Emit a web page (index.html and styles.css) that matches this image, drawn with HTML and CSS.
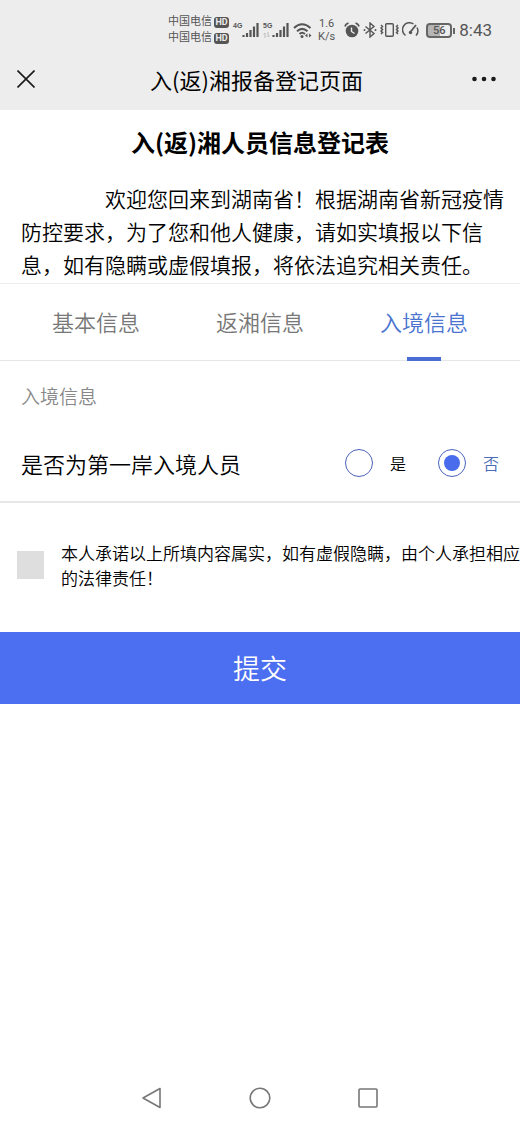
FILE: index.html
```html
<!DOCTYPE html>
<html lang="zh-CN">
<head>
<meta charset="utf-8">
<meta name="viewport" content="width=device-width, initial-scale=1">
<title>入(返)湘报备登记页面</title>
<link rel="stylesheet" href="styles.css">
</head>
<body>
<div class="screen">
  <header class="top">
    <div class="status">
      <div class="carriers">
        <div class="carrier">中国电信<span class="hd">HD</span></div>
        <div class="carrier">中国电信<span class="hd">HD</span></div>
      </div>
      <div class="signal">
        <span class="gen">4G</span>
        <svg width="17" height="16" viewBox="0 0 17 16"><path d="M1.5 13v2M5 11v4M8.500 8v7M12 4.500v10.500M15.500 1v14" stroke="#555" stroke-width="2.200"/></svg>
      </div>
      <div class="signal">
        <span class="gen">5G<svg class="arrows" width="7" height="6" viewBox="0 0 7 6"><path d="M2 6V1L.5 2.500M5 0v5l1.500-1.500" fill="none" stroke="#bbb"/></svg></span>
        <svg width="17" height="16" viewBox="0 0 17 16"><path d="M1.500 13v2M5 11v4M8.500 8v7M12 4.500v10.500M15.500 1v14" stroke="#555" stroke-width="2.200"/></svg>
      </div>
      <svg class="wifi" width="19" height="17" viewBox="0 0 19 17"><g fill="none" stroke="#555" stroke-width="2"><path d="M1 6Q9 -1.500 17.500 6"/><path d="M4 9.300Q9 4.500 14.500 9.300"/><path d="M6.500 12Q9 9.500 12 12"/></g><circle cx="9" cy="14.500" r="1.500" fill="#555"/><path d="M14.500 11.500v4L12 13.500zM16 11.500v4l2.500-2z" fill="#555"/></svg>
      <div class="speed"><span>1.6</span><span>K/s</span></div>
      <div class="indicators">
        <svg width="16" height="16" viewBox="0 0 16 16"><circle cx="8" cy="9" r="6.300" fill="#555"/><path d="M1 4.500Q1.500 2 4.500 1M15 4.500Q14.500 2 11.500 1" fill="none" stroke="#555" stroke-width="1.600"/><path d="M7.500 5.500v4l3 2" fill="none" stroke="#ededed" stroke-width="1.400"/></svg>
        <svg width="14" height="16" viewBox="0 0 14 16"><path d="M2.500 4.500l8.500 7L7 15V1l4 3.500-8.500 7" fill="none" stroke="#555" stroke-width="1.400"/><circle cx="1.500" cy="8" r="1" fill="#555"/><circle cx="12.500" cy="8" r="1" fill="#555"/></svg>
        <svg width="19" height="16" viewBox="0 0 19 16"><rect x="5.700" y="1.700" width="7.600" height="12.600" rx="1" fill="none" stroke="#555" stroke-width="1.400"/><path d="M1 3l1.500 1.500L1 6l1.500 1.500L1 9l1.500 1.500L1 12M18 3l-1.500 1.500L18 6l-1.500 1.500L18 9l-1.500 1.500L18 12" fill="none" stroke="#555" stroke-width="1.500"/></svg>
        <svg width="18" height="16" viewBox="0 0 18 16"><path d="M3.500 13.500A7 7 0 0 1 11.500 2M15 5.500a7 7 0 0 1-1 8" fill="none" stroke="#555" stroke-width="1.500"/><path d="M8 10.500L14 3" stroke="#555" stroke-width="1.800"/><circle cx="8.500" cy="10.500" r="1.700" fill="#555"/></svg>
      </div>
      <div class="battery"><span class="level">56</span></div>
      <div class="clock">8:43</div>
    </div>
    <div class="navbar">
      <button class="icon-button" type="button" aria-label="关闭"><svg width="18" height="18" viewBox="0 0 18 18"><path d="M.5.5l17 17M17.500.5l-17 17" stroke="#1a1a1a" stroke-width="1.600"/></svg></button>
      <div class="title">入(返)湘报备登记页面</div>
      <button class="icon-button" type="button" aria-label="更多"><svg width="24" height="6" viewBox="0 0 24 6"><g fill="#1a1a1a"><circle cx="2.500" cy="3" r="2.300"/><circle cx="12" cy="3" r="2.300"/><circle cx="21.500" cy="3" r="2.300"/></g></svg></button>
    </div>
  </header>

  <main>
    <h1 class="heading">入(返)湘人员信息登记表</h1>
    <p class="intro">欢迎您回来到湖南省！根据湖南省新冠疫情防控要求，为了您和他人健康，请如实填报以下信息，如有隐瞒或虚假填报，将依法追究相关责任。</p>
    <div class="tabs" role="tablist">
      <button class="tab" type="button" role="tab" aria-selected="false">基本信息</button>
      <button class="tab" type="button" role="tab" aria-selected="false">返湘信息</button>
      <button class="tab active" type="button" role="tab" aria-selected="true">入境信息</button>
    </div>
    <form>
      <h2 class="section">入境信息</h2>
      <div class="question" role="radiogroup" aria-labelledby="first-port">
        <span class="prompt" id="first-port">是否为第一岸入境人员</span>
        <label class="option"><input class="radio" type="radio" name="port" value="yes"><span>是</span></label>
        <label class="option"><input class="radio" type="radio" name="port" value="no" checked><span>否</span></label>
      </div>
      <label class="consent"><input class="check" type="checkbox"><span>本人承诺以上所填内容属实，如有虚假隐瞒，由个人承担相应的法律责任！</span></label>
      <button class="submit" type="submit">提交</button>
    </form>
  </main>

  <nav class="system">
    <button class="icon-button" type="button" aria-label="返回"><svg width="22" height="22" viewBox="0 0 22 22"><path d="M19 1.500v19L2 11z" fill="none" stroke="#777" stroke-width="1.600" stroke-linejoin="round"/></svg></button>
    <button class="icon-button" type="button" aria-label="主页"><svg width="22" height="22" viewBox="0 0 22 22"><circle cx="11" cy="11" r="9.800" fill="none" stroke="#777" stroke-width="1.600"/></svg></button>
    <button class="icon-button" type="button" aria-label="最近任务"><svg width="22" height="22" viewBox="0 0 22 22"><rect x="2" y="2" width="18" height="18" rx="1" fill="none" stroke="#777" stroke-width="1.600"/></svg></button>
  </nav>
</div>
</body>
</html>
```
FILE: styles.css
```css
* { box-sizing: border-box; }

body {
  margin: 0;
  background: #fff;
  color: #000;
  font-family: "Noto Sans CJK SC", sans-serif;
  font-weight: 350;
}

button {
  margin: 0;
  padding: 0;
  border: 0;
  background: none;
  color: inherit;
  font: inherit;
}

svg { display: block; flex: none; }

.screen {
  display: flex;
  flex-direction: column;
  min-height: 100vh;
}

main { flex: 1; }

/* Status bar */
.top { background: #ededed; }

.status {
  display: flex;
  align-items: center;
  justify-content: flex-end;
  padding: 14px 28px 4px 0;
  color: #555;
  font-family: Roboto, "Noto Sans CJK SC", sans-serif;
  font-weight: 400;
}

.carrier {
  display: flex;
  align-items: center;
  gap: 2px;
  font-size: 11px;
  line-height: 16px;
}

.hd {
  width: 15px;
  border-radius: 3px;
  background: #555;
  color: #ededed;
  font-size: 9px;
  font-weight: 700;
  line-height: 11px;
  text-align: center;
}

.signal {
  display: flex;
  align-items: center;
  margin-left: 4px;
}

.gen {
  align-self: flex-start;
  width: 9px;
  font-family: "Liberation Sans", sans-serif;
  font-size: 7px;
  font-weight: 700;
  line-height: 8px;
}

.arrows { margin-top: 2px; }

.wifi { margin-left: 4px; }

.speed {
  display: flex;
  flex-direction: column;
  align-items: center;
  margin-left: 6px;
  font-size: 11px;
  line-height: 13px;
}

.indicators {
  display: flex;
  gap: 3px;
  margin-left: 9px;
}

.battery {
  position: relative;
  width: 26px;
  margin-left: 6px;
  border: 2px solid #666;
  border-radius: 4px;
  background: linear-gradient(90deg, #b5b5b5 56%, #ededed 56%);
  text-align: center;
}

.battery::after {
  content: "";
  position: absolute;
  top: 3px;
  right: -5px;
  width: 2px;
  height: 6px;
  background: #666;
}

.level {
  display: block;
  font-size: 11px;
  font-weight: 500;
  line-height: 11px;
}

.clock {
  margin-left: 7px;
  font-size: 17px;
  line-height: 20px;
}

/* Page bar */
.navbar {
  display: flex;
  align-items: center;
  justify-content: space-between;
  height: 60px;
  padding: 0 24px 2px 17px;
}

.icon-button {
  display: flex;
  align-items: center;
  justify-content: center;
}

.title {
  flex: 1;
  padding-left: 6px;
  font-size: 22px;
  font-weight: 400;
  line-height: 32px;
  text-align: center;
}

/* Introduction */
.heading {
  margin: 0;
  padding: 14px 16px 0;
  color: #000;
  font-size: 24px;
  font-weight: 700;
  line-height: 36px;
  text-align: center;
}

.intro {
  margin: 0;
  padding: 22px 15px 2px 21px;
  font-size: 21px;
  line-height: 33px;
  text-indent: 4em;
}

/* Tabs */
.tabs {
  display: flex;
  padding: 0 14px;
  border-top: 1px solid #eee;
  border-bottom: 1px solid #e6e6ea;
}

.tab {
  position: relative;
  flex: 1;
  padding-bottom: 2px;
  color: #777;
  font-size: 22px;
  line-height: 74px;
}

.tab.active { color: #4a74d0; }

.tab.active::after {
  content: "";
  position: absolute;
  bottom: -1px;
  left: 50%;
  width: 34px;
  height: 4px;
  margin-left: -17px;
  background: #4a6cd4;
}

/* Form */
.section {
  margin: 0;
  padding: 19px 21px 0;
  color: #888;
  font-size: 19px;
  font-weight: 350;
  line-height: 32px;
}

.question {
  display: flex;
  align-items: center;
  gap: 32px;
  padding: 33px 21px 20px;
  border-bottom: 2px solid #e6e6e6;
}

.prompt {
  flex: 1;
  font-size: 22px;
  line-height: 36px;
}

.option {
  display: flex;
  align-items: center;
  gap: 17px;
  font-size: 16px;
  line-height: 28px;
}

.radio {
  appearance: none;
  display: grid;
  place-items: center;
  width: 28px;
  height: 28px;
  margin: 0;
  border: 1px solid #4a62bd;
  border-radius: 50%;
}

.radio:checked::before {
  content: "";
  width: 16px;
  height: 16px;
  border-radius: 50%;
  background: #486cec;
}

.radio:checked + span { color: #4a6cb8; }

.consent {
  display: flex;
  align-items: center;
  gap: 17px;
  padding: 37px 0 42px 17px;
  font-size: 17px;
  line-height: 25px;
}

.check {
  appearance: none;
  flex: none;
  width: 27px;
  height: 28px;
  margin: 0;
  background: #dedede;
}

.check:checked { background: #4c6ef0; }

.submit {
  display: block;
  width: 100%;
  background: #4c6ef0;
  color: #fff;
  font-size: 27px;
  line-height: 72px;
}

/* System navigation */
.system {
  display: flex;
  justify-content: center;
  gap: 86px;
  padding: 16px;
}
```
